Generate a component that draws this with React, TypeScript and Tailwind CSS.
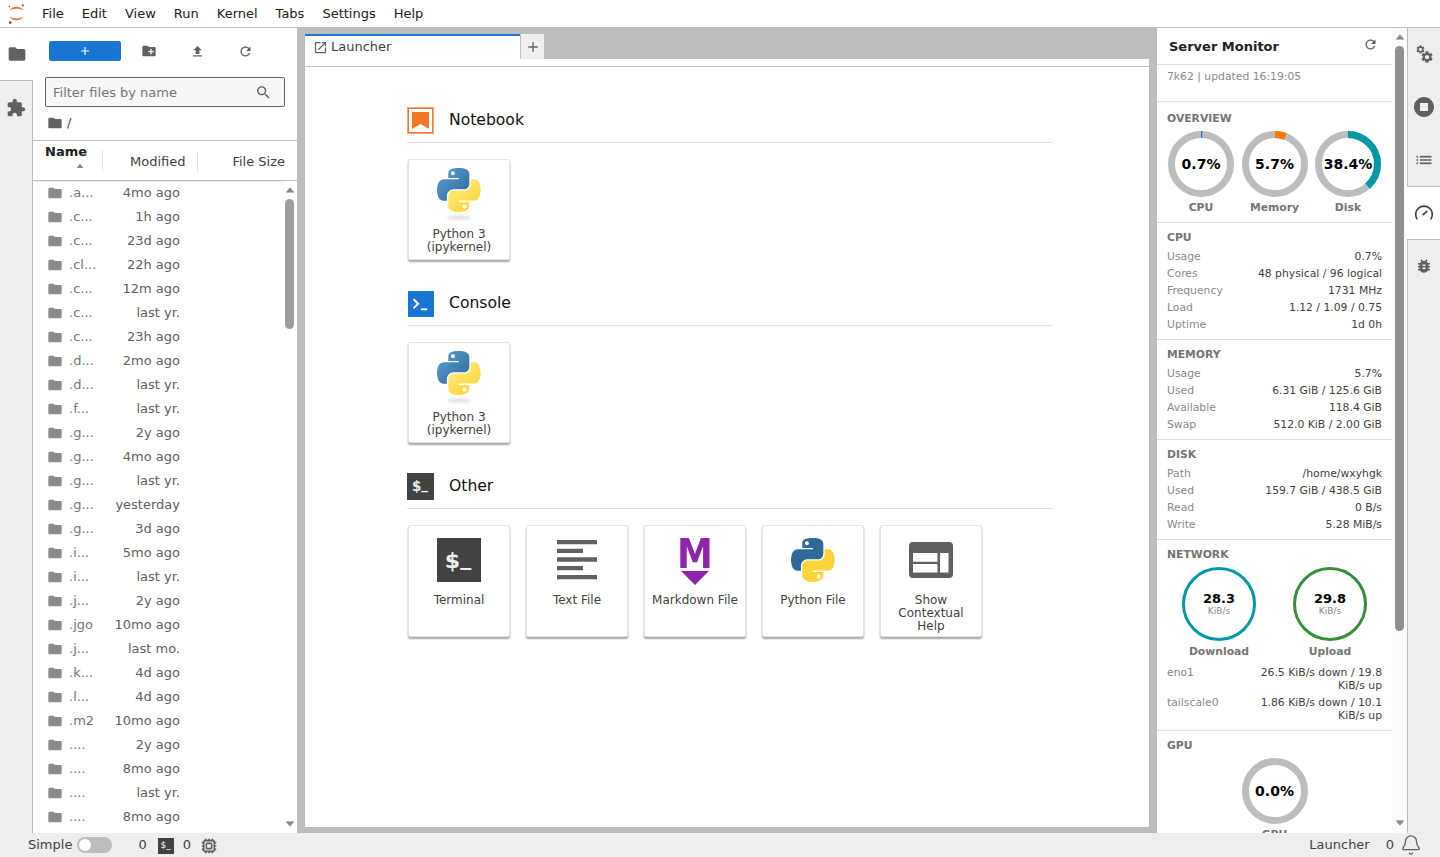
import { Bell, Cpu } from "lucide-react"

const FONT = "font-['DejaVu_Sans','Liberation_Sans',sans-serif]"

const folderD = "M10 4H4c-1.1 0-1.99.9-1.99 2L2 18c0 1.1.9 2 2 2h16c1.1 0 2-.9 2-2V8c0-1.1-.9-2-2-2h-8l-2-2z"
const refreshD =
  "M17.65 6.35C16.2 4.9 14.21 4 12 4c-4.42 0-7.99 3.58-7.99 8s3.57 8 7.99 8c3.73 0 6.84-2.55 7.73-6h-2.08c-.82 2.33-3.04 4-5.65 4-3.31 0-6-2.69-6-6s2.69-6 6-6c1.66 0 3.14.69 4.22 1.78L13 11h7V4l-2.35 2.35z"
const gearD =
  "M19.14 12.94c.04-.3.06-.61.06-.94 0-.32-.02-.64-.07-.94l2.03-1.58c.18-.14.23-.41.12-.61l-1.92-3.32c-.12-.22-.37-.29-.59-.22l-2.39.96c-.5-.38-1.03-.7-1.62-.94l-.36-2.54c-.04-.24-.24-.41-.48-.41h-3.84c-.24 0-.43.17-.47.41l-.36 2.54c-.59.24-1.13.57-1.62.94l-2.39-.96c-.22-.08-.47 0-.59.22L2.74 8.87c-.12.21-.08.47.12.61l2.03 1.58c-.05.3-.09.63-.09.94s.02.64.07.94l-2.03 1.58c-.18.14-.23.41-.12.61l1.92 3.32c.12.22.37.29.59.22l2.39-.96c.5.38 1.03.7 1.62.94l.36 2.54c.05.24.24.41.48.41h3.84c.24 0 .44-.17.47-.41l.36-2.54c.59-.24 1.13-.56 1.62-.94l2.39.96c.22.08.47 0 .59-.22l1.92-3.32c.12-.22.07-.47-.12-.61l-2.01-1.58zM12 15.6c-1.98 0-3.6-1.62-3.6-3.6s1.62-3.6 3.6-3.6 3.6 1.62 3.6 3.6-1.62 3.6-3.6 3.6z"
const pyBlue =
  "M54.92 0C50.34.02 45.96.41 42.11 1.1 30.77 3.1 28.71 7.29 28.71 15.03V25.25H55.5v3.41H18.66C10.87 28.66 4.05 33.34 1.92 42.24c-2.46 10.2-2.57 16.57 0 27.23C3.82 77.4 8.36 83.05 16.15 83.05h9.21V70.81c0-8.84 7.65-16.65 16.75-16.65h26.75c7.45 0 13.4-6.13 13.4-13.61V15.03c0-7.26-6.13-12.71-13.4-13.93C64.26.33 59.49-.02 54.92 0zM40.43 8.22c2.77 0 5.03 2.3 5.03 5.12 0 2.81-2.26 5.09-5.03 5.09-2.78 0-5.03-2.28-5.03-5.09 0-2.82 2.25-5.12 5.03-5.12z"
const pyYellow =
  "M85.64 28.66v11.89c0 9.22-7.82 16.98-16.78 16.98H42.11c-7.33 0-13.4 6.27-13.4 13.61v25.51c0 7.26 6.32 11.53 13.4 13.61 8.49 2.5 16.62 2.95 26.75 0 6.74-1.95 13.4-5.88 13.4-13.61V86.44H55.5v-3.41h40.15c7.78 0 10.68-5.43 13.39-13.56 2.8-8.37 2.68-16.42 0-27.23-1.93-7.78-5.61-13.58-13.39-13.58zM70.6 93.22c2.78 0 5.03 2.28 5.03 5.09 0 2.83-2.25 5.12-5.03 5.12-2.77 0-5.03-2.29-5.03-5.12 0-2.81 2.26-5.09 5.03-5.09z"

const files: [string, string][] = [
  [".a...", "4mo ago"],
  [".c...", "1h ago"],
  [".c...", "23d ago"],
  [".cl...", "22h ago"],
  [".c...", "12m ago"],
  [".c...", "last yr."],
  [".c...", "23h ago"],
  [".d...", "2mo ago"],
  [".d...", "last yr."],
  [".f...", "last yr."],
  [".g...", "2y ago"],
  [".g...", "4mo ago"],
  [".g...", "last yr."],
  [".g...", "yesterday"],
  [".g...", "3d ago"],
  [".i...", "5mo ago"],
  [".i...", "last yr."],
  [".j...", "2y ago"],
  [".jgo", "10mo ago"],
  [".j...", "last mo."],
  [".k...", "4d ago"],
  [".l...", "4d ago"],
  [".m2", "10mo ago"],
  ["....", "2y ago"],
  ["....", "8mo ago"],
  ["....", "last yr."],
  ["....", "8mo ago"],
]

function Mat({ d, className }: { d: string; className: string }) {
  return (
    <svg viewBox="0 0 24 24" fill="currentColor" className={className}>
      <path d={d} />
    </svg>
  )
}

function JupyterLogo() {
  return (
    <svg viewBox="0 0 24 28" className="h-[22px] w-[19px]">
      <path d="M3 10 C6 3 18 3 21 10 C17 6.5 7 6.5 3 10Z" fill="#f37726" />
      <path d="M3 17 C6 24 18 24 21 17 C17 20.5 7 20.5 3 17Z" fill="#f37726" />
      <circle cx="20" cy="3" r="1.4" fill="#616161" />
      <circle cx="4" cy="25" r="1.7" fill="#616161" />
      <circle cx="3" cy="4.5" r="1" fill="#616161" />
    </svg>
  )
}

function PythonLogo({ flat }: { flat?: boolean }) {
  return (
    <svg viewBox="0 0 112 112" className="h-[44px] w-[44px]">
      <defs>
        <linearGradient id="pyb" x1="0" y1="0" x2="1" y2="1">
          <stop offset="0" stopColor="#5a9fd4" />
          <stop offset="1" stopColor="#306998" />
        </linearGradient>
        <linearGradient id="pyy" x1="0.8" y1="0.9" x2="0.3" y2="0.2">
          <stop offset="0" stopColor="#ffd43b" />
          <stop offset="1" stopColor="#ffe873" />
        </linearGradient>
      </defs>
      <path d={pyBlue} fill={flat ? "#306998" : "url(#pyb)"} />
      <path d={pyYellow} fill={flat ? "#ffd43b" : "url(#pyy)"} />
    </svg>
  )
}

function Card({ label, children, tall }: { label: string; children: React.ReactNode; tall?: boolean }) {
  return (
    <div
      className={`flex w-[102px] flex-col items-center rounded-[2px] border border-[#e4e4e4] bg-white shadow-[0_2px_2px_rgba(0,0,0,0.35)] ${tall ? "h-[112px]" : "h-[101px]"}`}
    >
      <div className={`flex w-full flex-col items-center ${tall ? "mt-[12px] h-[48px]" : "mt-[8px] h-[52px]"}`}>{children}</div>
      <div className="mt-[8px] w-[92px] text-center text-[12px] leading-[13px] text-[#424242]">{label}</div>
    </div>
  )
}

function KernelCard() {
  return (
    <Card label="Python 3 (ipykernel)">
      <PythonLogo />
      <div className="mt-[3px] h-[5px] w-[24px] rounded-[50%] bg-[#e6e6e6] blur-[1px]" />
    </Card>
  )
}

function LauncherSection({
  title,
  icon,
  children,
}: {
  title: string
  icon: React.ReactNode
  children: React.ReactNode
}) {
  return (
    <div className="mb-[30px]">
      <div className="flex h-[27px] items-center">
        <div className="h-[27px] w-[27px]">{icon}</div>
        <h2 className="ml-[15px] mt-[1px] text-[15.6px] text-[#111]">{title}</h2>
      </div>
      <div className="mb-[16px] mt-[8px] h-px bg-[#e0e0e0]" />
      <div className="ml-[1px] flex gap-[16px]">{children}</div>
    </div>
  )
}

function Arrow({ down, className }: { down?: boolean; className?: string }) {
  return (
    <svg viewBox="0 0 10 6" className={`h-[6px] w-[10px] shrink-0 ${className ?? ""}`}>
      <path d={down ? "M0 0h10L5 6z" : "M0 6h10L5 0z"} fill="#8a8a8a" />
    </svg>
  )
}

function Donut({ value, color, label }: { value: number; color?: string; label: string }) {
  const r = 29.5
  const c = 2 * Math.PI * r
  return (
    <div className="flex w-[66px] flex-col items-center">
      <div className="relative h-[66px] w-[66px]">
        <svg viewBox="0 0 66 66" className="h-[66px] w-[66px] -rotate-90">
          <circle cx="33" cy="33" r={r} fill="none" stroke="#bdbdbd" strokeWidth="7" />
          {color && (
            <circle
              cx="33"
              cy="33"
              r={r}
              fill="none"
              stroke={color}
              strokeWidth="7"
              strokeDasharray={`${(value / 100) * c} ${c}`}
            />
          )}
        </svg>
        <div className="absolute inset-0 flex items-center justify-center pt-[1px] text-[14px] font-bold text-black">
          {value.toFixed(1)}%
        </div>
      </div>
      <div className="mt-[4px] text-[10.8px] font-bold leading-[13px] text-[#757575]">{label}</div>
    </div>
  )
}

function Ring({ value, label, border }: { value: string; label: string; border: string }) {
  return (
    <div className="flex w-[74px] flex-col items-center">
      <div className={`flex h-[74px] w-[74px] flex-col items-center justify-center rounded-full border-[3.5px] ${border}`}>
        <div className="text-[13px] font-bold leading-[15px] text-black">{value}</div>
        <div className="text-[9px] leading-[11px] text-[#8a8a8a]">KiB/s</div>
      </div>
      <div className="mt-[4px] whitespace-nowrap text-[10.8px] font-bold leading-[13px] text-[#757575]">{label}</div>
    </div>
  )
}

function Row({ k, v }: { k: string; v: string }) {
  return (
    <div className="flex justify-between py-[2px] text-[10.8px] leading-[13px]">
      <span className="text-[#8a8a8a]">{k}</span>
      <span className="max-w-[126px] text-right text-[#424242]">{v}</span>
    </div>
  )
}

function MonitorSection({ title, rows }: { title: string; rows: [string, string][] }) {
  return (
    <div className="border-b border-[#e0e0e0] px-[10px] pb-[6px] pt-[8px]">
      <h3 className="mb-[4px] text-[10.8px] font-bold leading-[13px] text-[#757575]">{title}</h3>
      {rows.map(([k, v]) => (
        <Row key={k} k={k} v={v} />
      ))}
    </div>
  )
}

function FileBrowser() {
  return (
    <div className="flex w-[264px] flex-col bg-white">
      {/* Toolbar */}
      <div className="flex h-[49px] shrink-0 items-start pl-[16px] pt-[13px] text-[#616161]">
        <div className="flex h-[20px] w-[72px] items-center justify-center rounded-[2px] bg-[#1976d2] text-white">
          <Mat d="M19 13h-6v6h-2v-6H5v-2h6V5h2v6h6v2z" className="h-[14px] w-[14px]" />
        </div>
        <div className="ml-[4px] flex h-[20px] w-[48px] items-center justify-center">
          <Mat d="M20 6h-8l-2-2H4c-1.11 0-1.99.89-1.99 2L2 18c0 1.11.89 2 2 2h16c1.11 0 2-.89 2-2V8c0-1.11-.89-2-2-2zm-1 8h-3v3h-2v-3h-3v-2h3V9h2v3h3v2z" className="h-[16px] w-[16px]" />
        </div>
        <div className="flex h-[20px] w-[48px] items-center justify-center">
          <Mat d="M9 16h6v-6h4l-7-7-7 7h4zm-4 2h14v2H5z" className="h-[15px] w-[15px]" />
        </div>
        <div className="flex h-[20px] w-[48px] items-center justify-center">
          <Mat d={refreshD} className="h-[15px] w-[15px]" />
        </div>
      </div>

      {/* Filter */}
      <div className="mx-[12px] flex h-[30px] w-[240px] shrink-0 items-center justify-between rounded-[2px] border border-[#616161] bg-[#f8f8f8] pl-[7px] pr-[12px] text-[13px] text-[#757575]">
        <span className="pt-[1px]">Filter files by name</span>
        <Mat d="M15.5 14h-.79l-.28-.27C15.41 12.59 16 11.11 16 9.5 16 5.91 13.09 3 9.5 3S3 5.91 3 9.5 5.91 16 9.5 16c1.61 0 3.09-.59 4.23-1.57l.27.28v.79l5 4.99L20.49 19l-4.99-5zm-6 0C7.01 14 5 11.99 5 9.5S7.01 5 9.5 5 14 7.01 14 9.5 11.99 14 9.5 14z" className="h-[17px] w-[17px] text-[#616161]" />
      </div>

      {/* Breadcrumb */}
      <div className="flex h-[33px] shrink-0 items-center pb-[1px] pl-[14px] text-[13px] text-[#424242]">
        <Mat d={folderD} className="h-[16px] w-[16px] text-[#616161]" />
        <span className="ml-[4px]">/</span>
      </div>

      {/* Header */}
      <div className="flex h-[41px] shrink-0 border-y border-[#bdbdbd] text-[13px] text-[#424242]">
        <div className="ml-[12px] flex w-[57px] flex-col items-start pt-[3px]">
          <span className="font-bold leading-[16px] text-[#212121]">Name</span>
          <Arrow className="ml-[30px] mt-[3px] scale-75" />
        </div>
        <div className="my-[9px] w-px bg-[#e0e0e0]" />
        <div className="flex w-[94px] items-center justify-between pt-[2px]">
          <span className="ml-[27px]">Modified</span>
          <span className="mr-[-1px] h-[22px] w-px bg-[#e0e0e0]" />
        </div>
        <div className="flex flex-1 items-center justify-end pr-[12px] pt-[2px]">File Size</div>
      </div>

      {/* Listing */}
      <div className="flex min-h-0 flex-1 overflow-hidden">
        <div className="w-[252px] shrink-0 shadow-[inset_0_3px_3px_-3px_rgba(0,0,0,0.15)]">
          {files.map(([name, modified], i) => (
            <div key={i} className="flex h-[24px] items-center text-[13px]">
              <Mat d={folderD} className="ml-[14px] h-[16px] w-[16px] shrink-0 text-[#8a8a8a]" />
              <span className="ml-[6px] w-[31px] text-[#757575]">{name}</span>
              <span className="w-[80px] text-right text-[#616161]">{modified}</span>
            </div>
          ))}
        </div>
        <div className="flex w-[9px] flex-col items-center">
          <Arrow className="mt-[6px] scale-90" />
          <div className="mt-[6px] h-[130px] w-[9px] shrink-0 rounded-[5px] bg-[#9e9e9e]" />
          <div className="flex-1" />
          <Arrow down className="mb-[6px] scale-90" />
        </div>
        <div className="flex-1" />
      </div>
    </div>
  )
}

function TermGlyph({ big }: { big?: boolean }) {
  return (
    <div
      className={`flex items-center justify-center bg-[#424242] text-[#eeeeee] ${big ? "h-[44px] w-[44px] pr-[2px] text-[22px] font-bold" : "h-[27px] w-[27px] pr-[1px] text-[13.5px] font-bold"}`}
    >
      <span>$</span>
      <span className={big ? "-translate-y-[3px]" : "-translate-y-[2px]"}>_</span>
    </div>
  )
}

function Launcher() {
  return (
    <div className="flex min-w-0 flex-1 flex-col bg-white">
      {/* Tab bar */}
      <div className="flex h-[39px] shrink-0 flex-col border-b border-[#bdbdbd]">
        <div className="flex h-[31px] items-start bg-[#bdbdbd] pt-[6px]">
          <div className="flex h-[32px] w-[215px] items-start border-t-2 border-[#1976d2] bg-white pl-[8px] pt-[3px] text-[13px] text-[#424242]">
            <Mat d="M19 19H5V5h7V3H5c-1.11 0-2 .9-2 2v14c0 1.1.89 2 2 2h14c1.1 0 2-.9 2-2v-7h-2v7zM14 3v2h3.59l-9.83 9.83 1.41 1.41L19 6.41V10h2V3h-7z" className="mt-[0.5px] h-[15px] w-[15px] text-[#616161]" />
            <span className="ml-[3px] leading-[16px]">Launcher</span>
          </div>
          <div className="flex h-[25px] w-[24px] items-center justify-center border-l border-[#bdbdbd] bg-[#eeeeee] text-[#616161]">
            <Mat d="M19 13h-6v6h-2v-6H5v-2h6V5h2v6h6v2z" className="h-[16px] w-[16px]" />
          </div>
        </div>
      </div>

      {/* Launcher body */}
      <div className="min-h-0 flex-1 overflow-hidden pl-[102px] pr-[96px] pt-[40px]">
        <LauncherSection
          title="Notebook"
          icon={
            <svg viewBox="0 0 27 27" className="h-[27px] w-[27px]">
              <rect x="0.5" y="0.5" width="26" height="26" fill="#fff" stroke="#f9a66c" />
              <rect x="1.5" y="1.5" width="24" height="24" fill="none" stroke="#f37726" />
              <path d="M5 5h17v17l-8.5-5L5 22z" fill="#f37726" />
            </svg>
          }
        >
          <KernelCard />
        </LauncherSection>

        <LauncherSection
          title="Console"
          icon={
            <svg viewBox="0 0 27 27" className="ml-[1px] h-[26px] w-[26px] translate-y-[1px]">
              <rect width="27" height="27" fill="#1976d2" />
              <path d="M5 9.2l1.4-1.4 5.6 5.4-5.6 5.4L5 17.2l4-4z" fill="#fff" />
              <rect x="13.5" y="18" width="6.5" height="2" fill="#fff" />
            </svg>
          }
        >
          <KernelCard />
        </LauncherSection>

        <LauncherSection title="Other" icon={<TermGlyph />}>
          <Card tall label="Terminal">
            <TermGlyph big />
          </Card>
          <Card tall label="Text File">
            <svg viewBox="0 0 44 44" className="h-[44px] w-[44px]">
              <path d="M2 2h40v4.3H2zM2 10.7h26V15H2zM2 19.3h40v4.4H2zM2 28h26v4.3H2zM2 37h40v4.3H2z" fill="#616161" />
            </svg>
          </Card>
          <Card tall label="Markdown File">
            <div className="-mt-px flex h-[48px] flex-col items-center">
              <span className="scale-x-90 text-[40px] font-bold leading-[34px] text-[#8e24aa]">M</span>
              <svg viewBox="0 0 28 14" className="h-[14px] w-[28px]">
                <path d="M0 0h28L14 14z" fill="#8e24aa" />
              </svg>
            </div>
          </Card>
          <Card tall label="Python File">
            <PythonLogo flat />
          </Card>
          <Card tall label="Show Contextual Help">
            <svg viewBox="0 0 44 36" className="mt-[4px] h-[36px] w-[44px]">
              <path
                fillRule="evenodd"
                d="M4 0h36a4 4 0 0 1 4 4v28a4 4 0 0 1-4 4H4a4 4 0 0 1-4-4V4a4 4 0 0 1 4-4zM4 11v8.7h24.5V11zM4 22v8.5h24.5V22zM31 11v19.5h8.5V11z"
                fill="#616161"
              />
            </svg>
          </Card>
        </LauncherSection>
      </div>
    </div>
  )
}

function ServerMonitor() {
  return (
    <div className="flex w-[250px] bg-white">
      <div className="w-[235px] shrink-0 overflow-hidden">
        <div className="flex h-[37px] items-center justify-between border-b border-[#e0e0e0] pl-[12px] pr-[14px]">
          <span className="pt-[2px] text-[13px] font-bold text-[#212121]">Server Monitor</span>
          <Mat d={refreshD} className="mb-[3px] h-[15px] w-[15px] text-[#616161]" />
        </div>
        <div className="h-[37px] border-b border-[#e0e0e0] px-[10px] pt-[5px] text-[10.8px] leading-[13px] text-[#8a8a8a]">
          7k62 | updated 16:19:05
        </div>

        <div className="h-[121px] border-b border-[#e0e0e0] pl-[11px] pr-[10px] pt-[10px]">
          <h3 className="mb-[6px] -ml-px text-[10.8px] font-bold leading-[13px] text-[#757575]">OVERVIEW</h3>
          <div className="flex gap-[7.5px]">
            <Donut value={0.7} color="#1976d2" label="CPU" />
            <Donut value={5.7} color="#f57c00" label="Memory" />
            <Donut value={38.4} color="#0097a7" label="Disk" />
          </div>
        </div>

        <MonitorSection
          title="CPU"
          rows={[
            ["Usage", "0.7%"],
            ["Cores", "48 physical / 96 logical"],
            ["Frequency", "1731 MHz"],
            ["Load", "1.12 / 1.09 / 0.75"],
            ["Uptime", "1d 0h"],
          ]}
        />
        <MonitorSection
          title="MEMORY"
          rows={[
            ["Usage", "5.7%"],
            ["Used", "6.31 GiB / 125.6 GiB"],
            ["Available", "118.4 GiB"],
            ["Swap", "512.0 KiB / 2.00 GiB"],
          ]}
        />
        <MonitorSection
          title="DISK"
          rows={[
            ["Path", "/home/wxyhgk"],
            ["Used", "159.7 GiB / 438.5 GiB"],
            ["Read", "0 B/s"],
            ["Write", "5.28 MiB/s"],
          ]}
        />

        <div className="border-b border-[#e0e0e0] px-[10px] pb-[6px] pt-[8px]">
          <h3 className="mb-[6px] text-[10.8px] font-bold leading-[13px] text-[#757575]">NETWORK</h3>
          <div className="mb-[6px] flex gap-[37px] pl-[15px]">
            <Ring value="28.3" label="Download" border="border-[#0097a7]" />
            <Ring value="29.8" label="Upload" border="border-[#388e3c]" />
          </div>
          <Row k="eno1" v="26.5 KiB/s down / 19.8 KiB/s up" />
          <Row k="tailscale0" v="1.86 KiB/s down / 10.1 KiB/s up" />
        </div>

        <div className="px-[10px] pt-[8px]">
          <h3 className="mb-[6px] text-[10.8px] font-bold leading-[13px] text-[#757575]">GPU</h3>
          <div className="flex justify-center">
            <Donut value={0} label="GPU" />
          </div>
        </div>
      </div>
      <div className="flex w-[15px] flex-col items-center bg-[#fbfbfb]">
        <Arrow className="mt-[6px] scale-90" />
        <div className="mt-[6px] h-[585px] w-[9px] shrink-0 rounded-[5px] bg-[#8f8f8f]" />
        <div className="flex-1" />
        <Arrow down className="mb-[7px] scale-90" />
      </div>
    </div>
  )
}

function RightRail() {
  const tab = "flex h-[52px] items-center justify-center border-l border-[#bdbdbd] text-[#616161]"
  return (
    <div className="flex w-[33px] flex-col bg-[#eeeeee]">
      <div className={tab}>
        <svg viewBox="0 0 24 24" fill="currentColor" className="h-[19px] w-[19px]">
          <g transform="translate(0.44 -0.86) scale(0.54)">
            <path d={gearD} />
          </g>
          <g transform="translate(6.2 6.2) scale(0.75)">
            <path d={gearD} />
          </g>
        </svg>
      </div>
      <div className={`${tab} pt-[2px]`}>
        <Mat d="M12 2C6.48 2 2 6.48 2 12s4.48 10 10 10 10-4.48 10-10S17.52 2 12 2zm4 14H8V8h8v8z" className="h-[24px] w-[24px]" />
      </div>
      <div className={`${tab} h-[55px] border-b pt-[1px]`}>
        <Mat d="M3 13h2v-2H3v2zm0 4h2v-2H3v2zm0-8h2V7H3v2zm4 4h14v-2H7v2zm0 4h14v-2H7v2zM7 7v2h14V7H7z" className="h-[20px] w-[20px]" />
      </div>
      <div className="flex h-[52px] items-center justify-center bg-white text-[#424242]">
        <svg viewBox="0 0 24 24" fill="none" stroke="currentColor" strokeWidth="2" className="h-[20px] w-[20px]">
          <path d="M3.5 19a10 10 0 1 1 17 0" strokeLinecap="round" />
          <path d="M11 14l4.5-4" strokeLinecap="round" />
        </svg>
      </div>
      <div className={`${tab} border-t`}>
        <Mat d="M20 8h-2.81c-.45-.78-1.07-1.45-1.82-1.96L17 4.41 15.59 3l-2.17 2.17C12.96 5.06 12.49 5 12 5c-.49 0-.96.06-1.41.17L8.41 3 7 4.41l1.62 1.63C7.88 6.55 7.26 7.22 6.81 8H4v2h2.09c-.05.33-.09.66-.09 1v1H4v2h2v1c0 .34.04.67.09 1H4v2h2.81c1.04 1.79 2.97 3 5.19 3s4.15-1.21 5.19-3H20v-2h-2.09c.05-.33.09-.66.09-1v-1h2v-2h-2v-1c0-.34-.04-.67-.09-1H20V8zm-6 8h-4v-2h4v2zm0-4h-4v-2h4v2z" className="h-[18px] w-[18px]" />
      </div>
      <div className="flex-1 border-l border-[#bdbdbd]" />
    </div>
  )
}

function LeftRail() {
  return (
    <div className="flex w-[33px] flex-col bg-[#eeeeee] text-[#616161]">
      <div className="flex h-[52px] items-center justify-center bg-white">
        <Mat d={folderD} className="h-[20px] w-[20px]" />
      </div>
      <div className="flex h-[54px] items-center justify-center border-r border-t border-[#bdbdbd]">
        <Mat d="M20.5 11H19V7c0-1.1-.9-2-2-2h-4V3.5C13 2.12 11.88 1 10.5 1S8 2.12 8 3.5V5H4c-1.1 0-1.99.9-1.99 2v3.8H3.5c1.49 0 2.7 1.21 2.7 2.7s-1.21 2.7-2.7 2.7H2V20c0 1.1.9 2 2 2h3.8v-1.5c0-1.49 1.21-2.7 2.7-2.7 1.49 0 2.7 1.21 2.7 2.7V22H17c1.1 0 2-.9 2-2v-4h1.5c1.38 0 2.5-1.12 2.5-2.5S21.88 11 20.5 11z" className="h-[20px] w-[20px]" />
      </div>
      <div className="flex-1 border-r border-[#bdbdbd]" />
    </div>
  )
}

function StatusBar() {
  return (
    <div className="flex h-[24px] shrink-0 items-center bg-[#eeeeee] text-[13px] text-[#424242]">
      <span className="ml-[28px]">Simple</span>
      <div className="ml-[5px] flex h-[16px] w-[35px] items-center rounded-full bg-[#bdbdbd] pl-[2px]">
        <div className="h-[12px] w-[12px] rounded-full bg-white" />
      </div>
      <span className="ml-[26px]">0</span>
      <div className="ml-[11px] mt-[2px] flex h-[16px] w-[16px] items-center justify-center bg-[#424242] text-[9px] text-white">$_</div>
      <span className="ml-[9px]">0</span>
      <Cpu className="ml-[10px] mt-[1px] h-[16px] w-[16px] text-[#616161]" strokeWidth={2.4} />
      <div className="flex-1" />
      <span>Launcher</span>
      <span className="ml-[16px]">0</span>
      <Bell className="ml-[6px] mr-[18px] h-[22px] w-[22px] text-[#616161]" strokeWidth={1.5} />
    </div>
  )
}

export default function App() {
  const menus = ["File", "Edit", "View", "Run", "Kernel", "Tabs", "Settings", "Help"]
  return (
    <div className={`flex h-[857px] w-[1440px] flex-col overflow-hidden bg-white ${FONT}`}>
      {/* Menu bar */}
      <div className="flex h-[28px] shrink-0 items-center border-b border-[#bdbdbd] text-[13px] text-[#212121]">
        <div className="flex w-[33px] justify-center pr-[1px]">
          <JupyterLogo />
        </div>
        {menus.map((m) => (
          <span key={m} className="px-[9px] leading-[27px]">
            {m}
          </span>
        ))}
      </div>

      <div className="flex min-h-0 flex-1">
        <LeftRail />
        <FileBrowser />
        <div className="flex min-w-0 flex-1 bg-[#bdbdbd] px-[8px] pb-[6px]">
          <Launcher />
        </div>
        <ServerMonitor />
        <RightRail />
      </div>

      <StatusBar />
    </div>
  )
}
